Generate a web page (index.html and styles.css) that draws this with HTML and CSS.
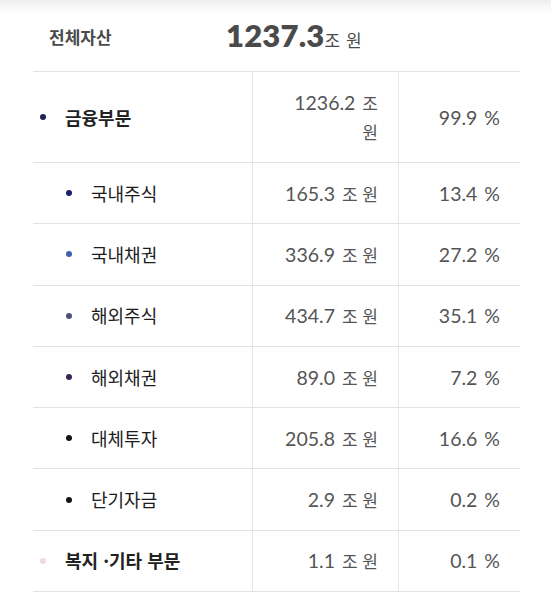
FILE: index.html
```html
<!DOCTYPE html>
<html lang="ko">
<head>
<meta charset="utf-8">
<link rel="stylesheet" href="styles.css">
</head>
<body>
<div class="page">
  <div class="total">
    <div class="total-label">전체자산</div>
    <div class="total-value"><span class="total-num">1237.3</span><span class="total-unit">조 원</span></div>
  </div>
  <div class="assets">
    <div class="row tall">
      <div class="cell label top"><span class="dot d-fin"></span><span class="name">금융부문</span></div>
      <div class="cell val"><span>1236.2 <span class="k">조</span><br><span class="k">원</span></span></div>
      <div class="cell pct"><span>99.9 %</span></div>
    </div>
    <div class="row">
      <div class="cell label sub"><span class="dot d-ks"></span><span class="name">국내주식</span></div>
      <div class="cell val"><span>165.3 <span class="k">조 원</span></span></div>
      <div class="cell pct"><span>13.4 %</span></div>
    </div>
    <div class="row">
      <div class="cell label sub"><span class="dot d-kb"></span><span class="name">국내채권</span></div>
      <div class="cell val"><span>336.9 <span class="k">조 원</span></span></div>
      <div class="cell pct"><span>27.2 %</span></div>
    </div>
    <div class="row">
      <div class="cell label sub"><span class="dot d-fs"></span><span class="name">해외주식</span></div>
      <div class="cell val"><span>434.7 <span class="k">조 원</span></span></div>
      <div class="cell pct"><span>35.1 %</span></div>
    </div>
    <div class="row">
      <div class="cell label sub"><span class="dot d-fb"></span><span class="name">해외채권</span></div>
      <div class="cell val"><span>89.0 <span class="k">조 원</span></span></div>
      <div class="cell pct"><span>7.2 %</span></div>
    </div>
    <div class="row">
      <div class="cell label sub"><span class="dot d-alt"></span><span class="name">대체투자</span></div>
      <div class="cell val"><span>205.8 <span class="k">조 원</span></span></div>
      <div class="cell pct"><span>16.6 %</span></div>
    </div>
    <div class="row">
      <div class="cell label sub"><span class="dot d-st"></span><span class="name">단기자금</span></div>
      <div class="cell val"><span>2.9 <span class="k">조 원</span></span></div>
      <div class="cell pct"><span>0.2 %</span></div>
    </div>
    <div class="row">
      <div class="cell label top"><span class="dot d-wel"></span><span class="name">복지 ·기타 부문</span></div>
      <div class="cell val"><span>1.1 <span class="k">조 원</span></span></div>
      <div class="cell pct"><span>0.1 %</span></div>
    </div>
  </div>
</div>
</body>
</html>
```

FILE: styles.css
```css
html, body {
  margin: 0;
  padding: 0;
}
body {
  background: linear-gradient(#ececec 0px, #f7f7f7 6px, #ffffff 14px) no-repeat;
  background-color: #fff;
  font-family: Lato, "Noto Sans CJK KR", sans-serif;
  color: #333;
}
.page {
  padding: 0 31px 0 33px;
}
.total {
  display: flex;
  align-items: center;
  height: 71px;
  padding-left: 16px;
  box-sizing: border-box;
  padding-bottom: 2px;
}
.total-label {
  width: 177px;
  font-family: "Noto Sans CJK KR", sans-serif;
  font-weight: 700;
  font-size: 17px;
  color: #4a4a4a;
  padding-top: 4px;
}
.total-value {
  display: flex;
  align-items: baseline;
  color: #4a4a4a;
}
.total-num {
  font-family: Lato, sans-serif;
  font-weight: 800;
  font-size: 31px;
  letter-spacing: 0.2px;
}
.total-unit {
  font-family: "Noto Sans CJK KR", sans-serif;
  font-size: 17px;
  word-spacing: 1px;
}
.assets {
  width: 487px;
  border-top: 1px solid #e3e3e3;
}
.row {
  display: grid;
  grid-template-columns: 219px 146px 122px;
  height: 61.3px;
  box-sizing: border-box;
  border-bottom: 1px solid #e3e3e3;
}
.row.tall {
  height: 91px;
}
.cell {
  display: flex;
  align-items: center;
  line-height: 29px;
}
.cell + .cell {
  border-left: 1px solid #e6e6e6;
}
.label {
  padding-left: 7px;
  font-family: "Noto Sans CJK KR", sans-serif;
  font-size: 18px;
  font-weight: 400;
  color: #1c1c1c;
}
.label.sub {
  padding-left: 33px;
}
.label.top .name {
  font-weight: 700;
  color: #222;
}
.dot {
  flex: none;
  width: 6px;
  height: 6px;
  border-radius: 50%;
  margin-right: 19px;
}
.d-fin { background: #1f2257; }
.d-ks { background: #1a1f6b; }
.d-kb { background: #3e5fa9; }
.d-fs { background: #4c4f7c; }
.d-fb { background: #3a2650; }
.d-alt { background: #141414; }
.d-st { background: #141414; }
.d-wel { background: #f3d9df; }
.val,
.pct {
  justify-content: flex-end;
  text-align: right;
  padding-right: 20px;
  color: #555;
  font-family: Lato, "Noto Sans CJK KR", sans-serif;
  font-size: 19.5px;
  word-spacing: 2px;
}
.k {
  font-family: "Noto Sans CJK KR", sans-serif;
  font-size: 17px;
  word-spacing: 0;
}
```
